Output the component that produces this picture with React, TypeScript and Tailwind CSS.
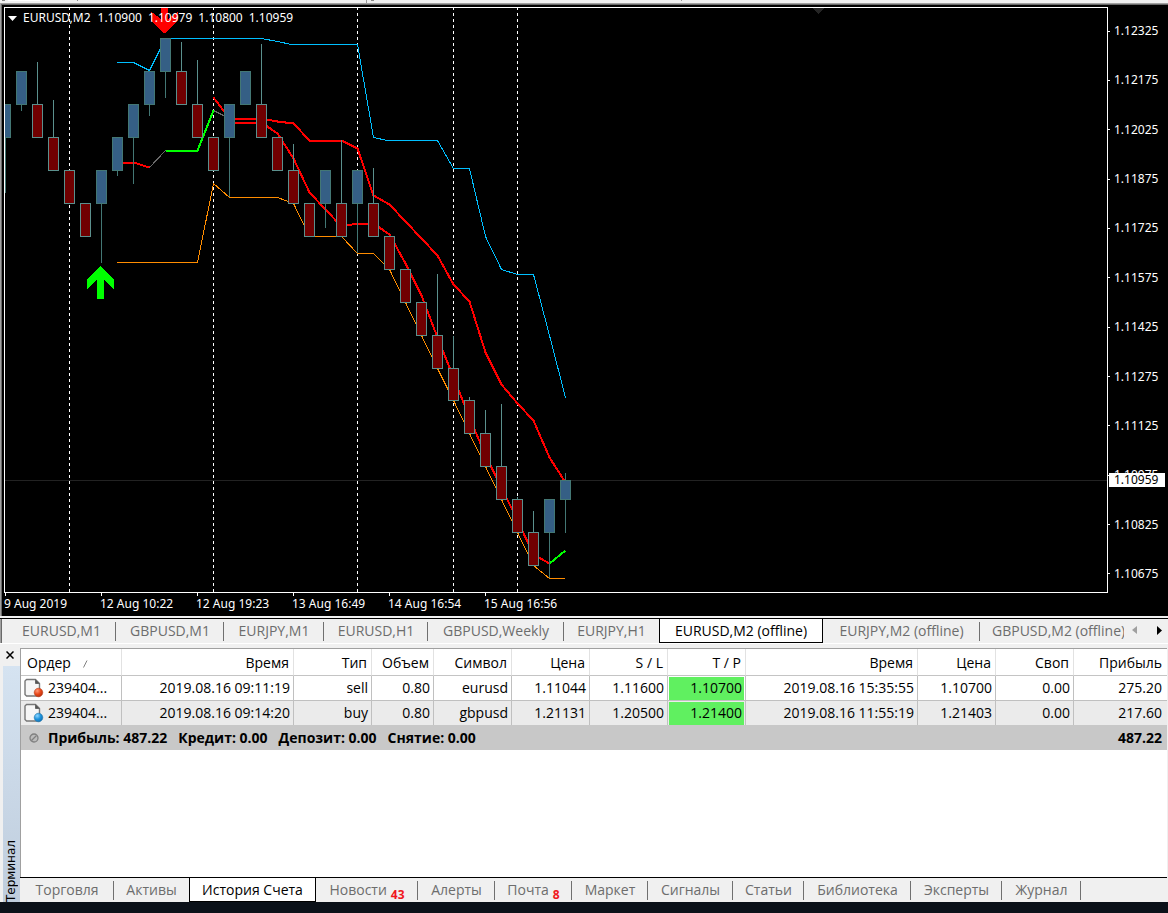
import React from "react";

type Candle = { x: number; top: number; bottom: number; up?: boolean; high?: number; low?: number };

const candles: Candle[] = [
  { x: 5, top: 104, bottom: 137, up: true, low: 193 },
  { x: 21, top: 71, bottom: 104, up: true, low: 111 },
  { x: 37, top: 104, bottom: 137, high: 62 },
  { x: 53, top: 137, bottom: 170, high: 100 },
  { x: 69, top: 170, bottom: 203 },
  { x: 85, top: 203, bottom: 236 },
  { x: 101, top: 170, bottom: 203, up: true, low: 263 },
  { x: 117, top: 137, bottom: 170, up: true, low: 176 },
  { x: 133, top: 104, bottom: 137, up: true, low: 184 },
  { x: 149, top: 71, bottom: 104, up: true, low: 116 },
  { x: 165, top: 38, bottom: 71, up: true, low: 98 },
  { x: 181, top: 71, bottom: 104, high: 42 },
  { x: 197, top: 104, bottom: 137, high: 60 },
  { x: 213, top: 137, bottom: 170 },
  { x: 229, top: 104, bottom: 137, up: true, low: 197 },
  { x: 245, top: 71, bottom: 104, up: true },
  { x: 261, top: 104, bottom: 137, high: 44 },
  { x: 277, top: 137, bottom: 170 },
  { x: 293, top: 170, bottom: 203, high: 144 },
  { x: 309, top: 203, bottom: 236 },
  { x: 325, top: 170, bottom: 203, up: true, low: 228 },
  { x: 341, top: 203, bottom: 236, high: 140 },
  { x: 357, top: 170, bottom: 203, up: true, low: 253 },
  { x: 373, top: 203, bottom: 236, high: 168 },
  { x: 389, top: 236, bottom: 269 },
  { x: 405, top: 269, bottom: 302 },
  { x: 421, top: 302, bottom: 335 },
  { x: 437, top: 335, bottom: 368, high: 274 },
  { x: 453, top: 368, bottom: 400, high: 336 },
  { x: 469, top: 400, bottom: 433, high: 397 },
  { x: 485, top: 433, bottom: 466, high: 410 },
  { x: 501, top: 466, bottom: 499, high: 404 },
  { x: 517, top: 499, bottom: 532, high: 497 },
  { x: 533, top: 532, bottom: 565, high: 511 },
  { x: 549, top: 499, bottom: 532, up: true, low: 578 },
  { x: 565, top: 480, bottom: 499, up: true, high: 473, low: 533 },
];

const lines = [
  { color: "#00bfff", width: 1, points: "117,62 133,62 149,70 165,38 261,38 277,41 291,44 357,44 373,137 387,140 437,140 453,168 469,168 485,236 501,269 517,274 533,274 549,335 565,397" },
  { color: "#ff8c00", width: 1, points: "117,262 197,262 213,183 229,197 277,197 293,203 309,236 341,236 357,253 373,253 389,269 405,302 421,335 437,368 453,400 469,433 485,466 501,499 517,532 533,565 549,578 564,578" },
  { color: "#696969", width: 1, points: "149,167 165,150" },
  { color: "#696969", width: 1, points: "213,110 229,118" },
  { color: "#ff0000", width: 2, points: "117,162 133,162 149,167" },
  { color: "#00ff00", width: 2, points: "165,150 197,150 213,110" },
  { color: "#ff0000", width: 2, points: "213,97 229,118 261,118 277,121 293,123 309,140 341,140 357,148 373,195 389,204 405,221 421,238 437,255 453,284 469,301 485,352 501,384 517,403 533,420 549,457 565,482" },
  { color: "#ff0000", width: 2, points: "229,122 261,122 277,133 293,158 309,192 325,209 341,226 357,223 373,223 389,234 405,263 421,295 437,337 453,377 469,417 485,455 501,487 517,520 533,554 549,563" },
  { color: "#00ff00", width: 2, points: "549,563 565,550" },
];

const sessions = [69, 213, 357, 453, 517];

const quotes = ["1.10900", "1.10979", "1.10800", "1.10959"];

const prices = [
  "1.12325", "1.12175", "1.12025", "1.11875", "1.11725", "1.11575",
  "1.11425", "1.11275", "1.11125", "1.10975", "1.10825", "1.10675",
];

const times = ["9 Aug 2019", "12 Aug 10:22", "12 Aug 19:23", "13 Aug 16:49", "14 Aug 16:54", "15 Aug 16:56"];

const chartTabs = [
  { label: "EURUSD,M1", width: "w-[109px]" },
  { label: "GBPUSD,M1", width: "w-[108px]" },
  { label: "EURJPY,M1", width: "w-[100px]" },
  { label: "EURUSD,H1", width: "w-[104px]" },
  { label: "GBPUSD,Weekly", width: "w-[136px]" },
  { label: "EURJPY,H1", width: "w-[95px]", last: true },
  { label: "EURUSD,M2 (offline)", width: "w-[164px]", active: true },
  { label: "EURJPY,M2 (offline)", width: "w-[157px]" },
];

const terminalTabs = [
  { label: "Торговля", width: "w-[94px]" },
  { label: "Активы", width: "w-[75px]", last: true },
  { label: "История Счета", width: "w-[127px]", active: true },
  { label: "Новости", width: "w-[102px]", count: "43" },
  { label: "Алерты", width: "w-[77px]" },
  { label: "Почта", width: "w-[77px]", count: "8" },
  { label: "Маркет", width: "w-[76px]" },
  { label: "Сигналы", width: "w-[85px]" },
  { label: "Статьи", width: "w-[71px]" },
  { label: "Библиотека", width: "w-[107px]" },
  { label: "Эксперты", width: "w-[91px]" },
  { label: "Журнал", width: "w-[79px]" },
];

const columns = [
  { label: "Ордер", width: "w-[101px]" },
  { label: "Время", width: "w-[172px]" },
  { label: "Тип", width: "w-[78px]" },
  { label: "Объем", width: "w-[62px]" },
  { label: "Символ", width: "w-[78px]" },
  { label: "Цена", width: "w-[78px]" },
  { label: "S / L", width: "w-[78px]" },
  { label: "T / P", width: "w-[78px]" },
  { label: "Время", width: "w-[172px]" },
  { label: "Цена", width: "w-[78px]" },
  { label: "Своп", width: "w-[78px]" },
  { label: "Прибыль", width: "" },
];

const orders = [
  { sell: true, cells: ["2019.08.16 09:11:19", "sell", "0.80", "eurusd", "1.11044", "1.11600", "1.10700", "2019.08.16 15:35:55", "1.10700", "0.00", "275.20"] },
  { sell: false, cells: ["2019.08.16 09:14:20", "buy", "0.80", "gbpusd", "1.21131", "1.20500", "1.21400", "2019.08.16 11:55:19", "1.21403", "0.00", "217.60"] },
];

const totals = ["Прибыль: 487.22", "Кредит: 0.00", "Депозит: 0.00", "Снятие: 0.00"];

function Plot() {
  return (
    <svg className="block h-[584px] w-full" shapeRendering="crispEdges" role="img" aria-label="EURUSD,M2">
      <g transform="translate(-5,-8)">
        {sessions.map((x) => (
          <line key={x} x1={x + 0.5} x2={x + 0.5} y1="8" y2="592" stroke="#fff" strokeDasharray="3 3" strokeDashoffset="1" />
        ))}
        <rect x="5" y="480" width="100%" height="1" fill="#222" />
        <path d="M813 8h11l-5.500 6z" fill="#252525" />
        <g transform="translate(0.5,0.5)" fill="none">
          {lines.map((l, i) => (
            <polyline key={i} points={l.points} stroke={l.color} strokeWidth={l.width} strokeLinecap={l.width === 1 ? "square" : "butt"} />
          ))}
        </g>
        {candles.map((c) => (
          <g key={c.x} stroke={c.up ? "#437774" : "#5b908d"}>
            <line x1={c.x + 0.5} x2={c.x + 0.5} y1={c.high ?? c.top} y2={c.low ?? c.bottom} />
            <rect x={c.x - 4.5} y={c.top + 0.5} width="10" height={c.bottom - c.top} fill={c.up ? "#355f85" : "#700000"} />
          </g>
        ))}
        <path d="M100.500 266L114 279V289L104 280V299H97V280L87 289V279Z" fill="#00ff00" />
        <path d="M161 8h7v11l10-7.500V21L164.500 33.500 151 21v-9.500L161 19z" fill="#ff0000" />
      </g>
    </svg>
  );
}

function OrderIcon({ sell }: { sell: boolean }) {
  const id = sell ? "dot-sell" : "dot-buy";
  return (
    <svg className="h-5 w-5 shrink-0" viewBox="0 0 20 20" aria-hidden="true">
      <defs>
        <radialGradient id={id} cx="0.35" cy="0.3" r="0.8">
          <stop offset="0" stopColor={sell ? "#ff9a78" : "#8fd6ff"} />
          <stop offset="0.5" stopColor={sell ? "#e8481a" : "#1e94dd"} />
          <stop offset="1" stopColor={sell ? "#b02a08" : "#0d6bb0"} />
        </radialGradient>
      </defs>
      <path d="M2.500 1.500h9l4 4v12.500h-13L1 16.500V3z" fill="#f6f6f6" stroke="#777" strokeWidth="1.400" strokeLinejoin="round" />
      <path d="M11.500 1.500v4h4z" fill="#555" stroke="#666" />
      <circle cx="14.500" cy="14.500" r="4.300" fill={`url(#${id})`} stroke={sell ? "#b8421e" : "#2677aa"} strokeWidth="0.600" />
    </svg>
  );
}

type Tab = { label: string; width: string; active?: boolean; last?: boolean; count?: string };

function TabButton({ tab }: { tab: Tab }) {
  if (tab.active) {
    return (
      <button className={`${tab.width} h-6 shrink-0 whitespace-nowrap border-x border-b border-black bg-white pt-px text-black`}>
        {tab.label}
      </button>
    );
  }
  return (
    <button className={`${tab.width} relative flex h-6 shrink-0 items-center justify-center whitespace-nowrap text-[#6d6d6d]`}>
      <span>{tab.label}</span>
      {tab.count && <span className="ml-1 self-end text-[12px] leading-[14px] font-bold text-[#f01820]">{tab.count}</span>}
      {!tab.last && <span className="absolute top-[3px] right-0 h-[19px] w-px bg-[#707070]" />}
    </button>
  );
}

export default function App() {
  return (
    <div className="flex min-h-screen w-full flex-col bg-[#f0f0f0] font-['Open_Sans','Noto_Sans',sans-serif] text-[14px] leading-5 text-black">
      <div className="flex h-[3px] items-start">
        <span className="ml-[2px] h-px w-[3px] bg-[#888]" />
        <span className="ml-[3px] h-px w-8 bg-white" />
        <span className="ml-[37px] h-px w-px bg-[#888]" />
        <span className="ml-[288px] h-[3px] w-px bg-[#999]" />
        <span className="ml-1 h-px w-[3px] bg-[#888]" />
        <span className="ml-[307px] h-px w-px bg-[#999]" />
      </div>

      <section className="flex flex-col border-t border-l border-[#a0a0a0] font-['Noto_Sans',sans-serif] text-[12px] leading-[14px] text-white">
        <div className="flex flex-col border-t border-l border-[#696969] bg-black">
          <div className="flex">
            <div className="relative mt-[2px] ml-[2px] min-w-0 flex-1 border border-white">
              <Plot />
              <div className="absolute top-[3px] left-[3px] flex items-center whitespace-nowrap">
                <svg className="mr-[6px] h-[5px] w-[9px]" viewBox="0 0 9 5" aria-hidden="true">
                  <path d="M0 0h9L4.500 5z" fill="#fff" />
                </svg>
                <h1 className="flex gap-[6px]">
                  <span className="pr-[1px]">EURUSD,M2</span>
                  {quotes.map((q) => (
                    <span key={q}>{q}</span>
                  ))}
                </h1>
              </div>
            </div>
            <div className="relative flex w-[60px] shrink-0 flex-col justify-between pt-[19px] pb-[12px]">
              {prices.map((p) => (
                <div key={p} className="flex items-center">
                  <span className="mr-1 h-px w-[2px] bg-white" />
                  {p}
                </div>
              ))}
              <div className="absolute top-[468px] left-px w-14 bg-white pl-[5px] text-black">1.10959</div>
            </div>
          </div>
          <div className="flex h-[23px] pl-[2px]">
            {times.map((t) => (
              <div key={t} className="w-24 shrink-0 whitespace-nowrap">
                <div className="ml-px h-[3px] w-px bg-white" />
                <div className="pt-px">{t}</div>
              </div>
            ))}
          </div>
        </div>
      </section>

      <nav className="mt-[2px] flex h-[25px] overflow-hidden border-t border-black" aria-label="Графики">
        <div className="h-full w-[2px] shrink-0 border-l border-[#a0a0a0] bg-[#696969]" />
        <div className="flex min-w-0 flex-1 overflow-hidden pl-[5px]">
          {chartTabs.map((t) => (
            <TabButton key={t.label} tab={t} />
          ))}
          <button className="h-6 min-w-0 flex-1 overflow-hidden pl-3 text-left whitespace-nowrap text-[#6d6d6d]">GBPUSD,M2 (offline)</button>
        </div>
        <div className="flex w-11 shrink-0 items-center justify-between pr-[6px] pb-[2px] pl-2">
          <button aria-label="Назад" className="flex">
            <svg className="h-2 w-[5px]" viewBox="0 0 5 8"><path d="M5 0v8L0 4z" fill="#a0a0a0" /></svg>
          </button>
          <button aria-label="Вперёд" className="flex">
            <svg className="h-[9px] w-[5px]" viewBox="0 0 5 9"><path d="M0 0v9l5-4.500z" fill="#000" /></svg>
          </button>
        </div>
      </nav>
      <div className="h-[5px] border-t border-white" />

      <section className="flex flex-1">
        <aside className="flex w-5 shrink-0 flex-col pl-[3px]">
          <button aria-label="Закрыть" className="flex h-[18px] items-start pt-[3px] pl-[3px]">
            <svg className="h-2 w-2" viewBox="0 0 8 8"><path d="M0.500 0.500l7 7M7.500 0.500l-7 7" stroke="#000" strokeWidth="1.500" /></svg>
          </button>
          <div className="flex flex-1 items-start bg-linear-to-b from-[#d5e3f1] to-[#bfcddd]">
            <h2 className="w-4 rotate-180 self-end font-['DejaVu_Sans',sans-serif] text-[12px] leading-4 [writing-mode:vertical-rl]">Терминал</h2>
          </div>
        </aside>
        <div className="flex min-w-0 flex-1 flex-col">
          <div className="mr-px flex-1 border-t border-l border-[#a0a0a0] bg-white">
            <table className="w-full table-fixed border-separate border-spacing-0 text-right whitespace-nowrap">
              <thead>
                <tr>
                  {columns.map((c, i) => (
                    <th
                      key={i}
                      className={`${c.width} h-[27px] border-b border-[#c4c4c4] p-0 pt-px font-normal ${i < 11 ? "border-r border-r-[#e2e2e2]" : ""} ${i === 0 ? "pl-[6px] text-left" : i === 11 ? "pr-[5px]" : "pr-1"}`}
                    >
                      {c.label}
                      {i === 0 && (
                        <svg className="ml-3 inline h-2 w-[5px]" viewBox="0 0 5 8" aria-hidden="true">
                          <path d="M0.500 7.500L4 0.500" stroke="#808080" />
                        </svg>
                      )}
                    </th>
                  ))}
                </tr>
              </thead>
              <tbody>
                {orders.map((o) => (
                  <tr key={o.cells[0]} className={o.sell ? "bg-white" : "bg-[#ebebeb]"}>
                    <td className={`border-r border-[#c0c0c0] p-0 ${o.sell ? "h-[25px] border-b" : "h-6"}`}>
                      <div className="flex items-center gap-1 pl-[3px]">
                        <OrderIcon sell={o.sell} />
                        239404...
                      </div>
                    </td>
                    {o.cells.map((c, i) => (
                      <td
                        key={i}
                        className={`border-[#c0c0c0] p-0 ${o.sell ? "border-b" : ""} ${i < 10 ? "border-r" : ""}`}
                      >
                        {i === 6 ? (
                          <div className="mx-px h-[23px] bg-[#60f060] pt-px pr-[2px]">{c}</div>
                        ) : (
                          <div className={i === 10 ? "pr-[5px]" : "pr-[3px]"}>{c}</div>
                        )}
                      </td>
                    ))}
                  </tr>
                ))}
              </tbody>
              <tfoot>
                <tr className="bg-[#c8c8c8] font-bold">
                  <td colSpan={10} className="h-[25px] p-0 text-left">
                    <div className="flex items-center gap-[9px] pl-2">
                      <svg className="h-[10px] w-[10px]" viewBox="0 0 10 10" aria-hidden="true">
                        <circle cx="5" cy="5" r="4" fill="#bcbcbc" stroke="#808080" strokeWidth="1.300" />
                        <path d="M2.500 7.500l5-5" stroke="#808080" strokeWidth="1.300" />
                      </svg>
                      <div className="flex gap-[11px]">
                        {totals.map((t) => (
                          <span key={t}>{t}</span>
                        ))}
                      </div>
                    </div>
                  </td>
                  <td colSpan={2} className="p-0 pr-[5px]">487.22</td>
                </tr>
              </tfoot>
            </table>
          </div>
          <nav className="mr-px flex h-[25px] border-t border-black" aria-label="Терминал">
            {terminalTabs.map((t) => (
              <TabButton key={t.label} tab={t} />
            ))}
          </nav>
        </div>
      </section>
      <footer className="h-[11px] shrink-0 bg-[#0b1119]" />
    </div>
  );
}
